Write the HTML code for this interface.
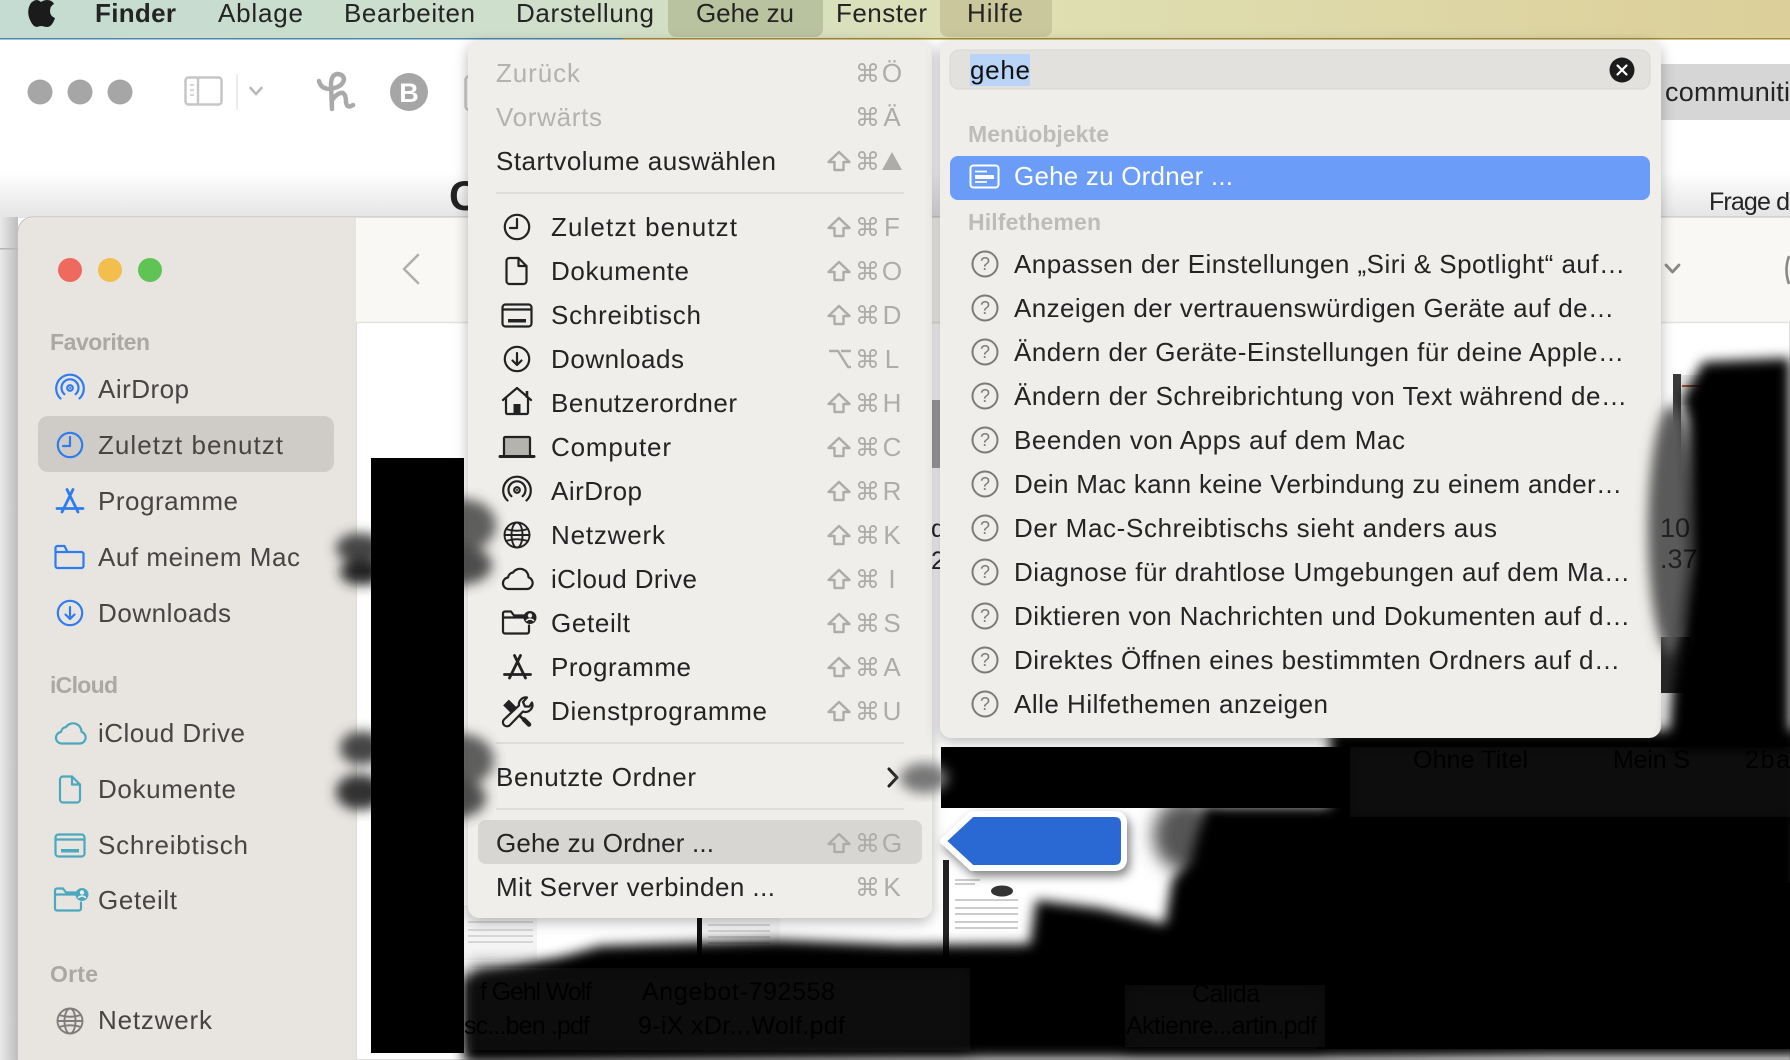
<!DOCTYPE html>
<html lang="de"><head><meta charset="utf-8"><title>Finder Gehe zu</title>
<style>
html,body{margin:0;padding:0;width:1790px;height:1060px;overflow:hidden;background:#fff}
svg{display:block}
text{font-family:"Liberation Sans",Arial,sans-serif;font-size:26px;fill:#242424}
.b{font-weight:700}
.g{fill:#b3b2ae}
.s{fill:#adaca8}
.c{font-family:"DejaVu Sans",sans-serif;font-size:25px;fill:#adaca8}
.l{font-weight:700;font-size:23px;fill:#bebcb8}
.f{fill:#464544}
.sl{font-weight:700;font-size:23px;fill:#aaa8a4}
.q{font-size:18px;fill:#7c7b78;text-anchor:middle}
.m{text-anchor:middle}
.ic{fill:none;stroke:currentColor;stroke-width:2.2;stroke-linecap:round;stroke-linejoin:round}
.d{font-size:25px;fill:#000}
</style></head><body>
<svg width="1790" height="1060" viewBox="0 0 1790 1060" xmlns="http://www.w3.org/2000/svg">
<defs>
<linearGradient id="mb" x1="0" x2="1" y1="0" y2="0"><stop offset="0" stop-color="#c4dcd2"/><stop offset=".3" stop-color="#cfdfcb"/><stop offset=".56" stop-color="#dfe0b4"/><stop offset="1" stop-color="#dccf99"/></linearGradient>
<linearGradient id="fade" x1="0" x2="0" y1="0" y2="1"><stop offset="0" stop-color="#fff"/><stop offset="1" stop-color="#e4e4e4"/></linearGradient>
<linearGradient id="lf" x1="0" x2="1" y1="0" y2="0"><stop offset="0" stop-color="#e9e9e9"/><stop offset="1" stop-color="#bdbdbd"/></linearGradient>
<filter id="b3" x="-30%" y="-30%" width="160%" height="160%"><feGaussianBlur stdDeviation="3"/></filter>
<filter id="b6" x="-30%" y="-30%" width="160%" height="160%"><feGaussianBlur stdDeviation="6"/></filter>
<filter id="b9" x="-50%" y="-50%" width="200%" height="200%"><feGaussianBlur stdDeviation="9"/></filter>
<filter id="ds" x="-10%" y="-10%" width="120%" height="120%"><feDropShadow dx="0" dy="4" stdDeviation="7" flood-color="#000" flood-opacity=".28"/></filter>
<filter id="as" x="-20%" y="-30%" width="140%" height="170%"><feDropShadow dx="3" dy="5" stdDeviation="5" flood-color="#000" flood-opacity=".5"/></filter>
<clipPath id="cm"><rect x="464" y="40" width="60" height="900"/></clipPath>
<path id="sh" fill="none" stroke="#adaca8" stroke-width="2.4" stroke-linejoin="round" d="M11 0L21.500 10H15.500V18H6.500V10H.5Z"/>
<g id="clock" class="ic"><circle r="12.200"/><path d="M0-8V1H-7"/></g>
<g id="doc" class="ic"><path d="M-7-13H2L10-5V10A3 3 0 0 1 7 13H-7A3 3 0 0 1-10 10V-10A3 3 0 0 1-7-13Z"/><path d="M2-13V-5H10"/></g>
<g id="desk" class="ic"><rect x="-14.500" y="-11" width="29" height="22" rx="3"/><path d="M-14-6H14"/><rect x="-9" y="3.500" width="18" height="3.500" fill="currentColor" stroke="none"/></g>
<g id="dl" class="ic"><circle r="12.200"/><path d="M0-6V6M-4.500 1.500L0 6L4.500 1.500"/></g>
<g id="home" class="ic"><path d="M-14-1L0-13L14-1"/><path d="M10-10V-3" stroke-width="2.600" stroke-linecap="butt"/><path d="M-11-3V11.500A1.500 1.500 0 0 0-9.500 13H9.500A1.500 1.500 0 0 0 11 11.500V-3"/><rect x="-3.500" y="3" width="7" height="10" fill="currentColor" stroke="none"/></g>
<g id="lap" class="ic"><path d="M-13 9V-9A1.500 1.500 0 0 1-11.500-10H11.500A1.500 1.500 0 0 1 13-9V9" fill="#b5b3ae"/><path d="M-17 9.500H17" stroke-width="3"/></g>
<g id="air" class="ic"><path d="M-9.500 10.500A13.800 13.800 0 1 1 9.500 10.500"/><path d="M-5.600 6.200A8.500 8.500 0 1 1 5.600 6.200"/><circle r="2.800" fill="none"/><circle r="1" fill="currentColor" stroke="none"/></g>
<g id="globe" class="ic" style="stroke-width:1.900"><circle r="12.500"/><ellipse rx="5.500" ry="12.500"/><path d="M-11-6Q0-2.500 11-6M-11 6Q0 2.500 11 6M-12.500 0H12.500"/></g>
<g id="cloud" class="ic"><path d="M-9 10.500H10A6 6 0 0 0 11.500-1.200A8.500 8.500 0 0 0-4-6A6 6 0 0 0-9-1A5.800 5.800 0 0 0-9 10.500Z"/></g>
<g id="shr" class="ic"><path d="M-16-6V9A2 2 0 0 0-14 11H8A2 2 0 0 0 10 9V3M-16-6V-9A2 2 0 0 1-14-11H-8L-5-7H5M-16-5H5"/><circle cx="11" cy="-5" r="6.500" fill="currentColor" stroke="none"/><circle cx="11" cy="-7" r="2.200" fill="#efeeea" stroke="none"/><path d="M7.500-2Q11-5 14.500-2" fill="none" stroke="#efeeea" stroke-width="1.500"/></g>
<g id="app" class="ic" style="stroke-width:2.800"><path d="M3-11.500L-8 11M-3-11.500L8 11M-13 7.500H13"/></g>
<g id="tool" class="ic"><path d="M-10-9L-2-1" stroke-width="8" stroke-linecap="butt"/><path d="M-2-1L12 12" stroke-width="2.800"/><path d="M8 8L13 13" stroke-width="4.500"/><path d="M-12 8L3-6A7 7 0 0 1 11-14L7-9.500L9-5L13.500-5L16-9A7 7 0 0 1 7 0L-6 13.500A4 4 0 0 1-12 8Z" fill="#efeeea"/></g>
<g id="fold" class="ic"><path d="M-14-5V9A2 2 0 0 0-12 11H12A2 2 0 0 0 14 9V-3A2 2 0 0 0 12-5ZM-14-5V-9A2 2 0 0 1-12-11H-5L-2-5"/></g>
</defs>

<!-- back window -->
<rect width="1790" height="1060" fill="#fff"/>
<rect x="0" y="172" width="1790" height="46" fill="url(#fade)"/>
<rect x="0" y="217" width="18" height="843" fill="url(#lf)"/>
<rect x="0" y="248" width="18" height="1.500" fill="#b5b5b5"/>
<circle cx="40" cy="92" r="12.500" fill="#a6a6a6"/><circle cx="80" cy="92" r="12.500" fill="#a6a6a6"/><circle cx="120" cy="92" r="12.500" fill="#a6a6a6"/>
<rect x="185.500" y="77.500" width="36" height="27" rx="3" fill="none" stroke="#c6c6c6" stroke-width="2.500"/>
<path d="M198 77V105" stroke="#c6c6c6" stroke-width="2.500"/><path d="M190 85h4M190 90h4M190 95h4" stroke="#c6c6c6" stroke-width="1.500"/>
<path d="M237 74V110" stroke="#e6e6e6" stroke-width="1.500"/>
<path d="M250.500 88L256 94L261.500 88" fill="none" stroke="#b8b8b8" stroke-width="2.500" stroke-linecap="round"/>
<path d="M319 81Q321 89 330 89Q343 87 344 79Q343 74 337 74Q331 75 331 85L332 109M332 100Q338 92 343 93Q346 95 346 102Q347 109 353 105" fill="none" stroke="#a9a9a9" stroke-width="4.500" stroke-linecap="round" stroke-linejoin="round"/>
<circle cx="409" cy="92" r="19" fill="#a6a6a6"/><text x="409" y="102" class="b m" style="font-size:27px;fill:#fff">B</text>
<rect x="465.500" y="76" width="20" height="34" rx="4" fill="none" stroke="#c8c8c8" stroke-width="2.500"/>
<text x="449" y="210" class="b" style="font-size:42px;fill:#222">C</text>
<rect x="1655" y="64" width="135" height="56" fill="#d6d6d6"/>
<text x="1665" y="101" textLength="125" lengthAdjust="spacing" style="font-size:27px">communiti</text>
<text x="1709" y="210" textLength="81" lengthAdjust="spacing" style="font-size:25px">Frage d</text>

<!-- finder window -->
<path d="M18 1060V232A15 15 0 0 1 33 217H1790V1060Z" fill="#fff" stroke="#bdbdbd" stroke-width="1"/>
<rect x="356" y="218" width="1434" height="104" fill="#faf8f4"/>
<path d="M356 322.500H1790" stroke="#e4e2de" stroke-width="1.500"/>
<path d="M18 1060V232A15 15 0 0 1 33 218H356V1060Z" fill="#e8e5e1"/>
<path d="M356.500 322V1060" stroke="#dedcd8"/>
<ellipse cx="70" cy="270" rx="12" ry="12" fill="#ee6a5e"/><ellipse cx="110" cy="270" rx="12" ry="12" fill="#f4be4f"/><ellipse cx="150" cy="270" rx="12" ry="12" fill="#5fc454"/>
<path d="M418 255L404 269L418 283" fill="none" stroke="#b2b0ac" stroke-width="2.600" stroke-linecap="round" stroke-linejoin="round"/>
<path d="M1666 265L1672.500 272L1679 265" fill="none" stroke="#8b8a86" stroke-width="2.800" stroke-linecap="round" stroke-linejoin="round"/>
<path d="M1789 256Q1784 270 1789 284" fill="none" stroke="#888" stroke-width="2.600"/>

<text x="50" y="350" textLength="100" lengthAdjust="spacing" class="sl">Favoriten</text>
<use href="#air" transform="translate(70 388)" color="#2f7bf0"/>
<text x="98" y="398" textLength="91" lengthAdjust="spacing" class="f">AirDrop</text>
<rect x="38" y="416" width="296" height="56" rx="10" fill="#cfccc7"/>
<use href="#clock" transform="translate(70 445)" color="#2f7bf0"/>
<text x="98" y="454" textLength="185" lengthAdjust="spacing" class="f">Zuletzt benutzt</text>
<use href="#app" transform="translate(70 501)" color="#2f7bf0"/>
<text x="98" y="510" textLength="140" lengthAdjust="spacing" class="f">Programme</text>
<use href="#fold" transform="translate(69.500 557)" color="#2f7bf0"/>
<text x="98" y="566" textLength="202" lengthAdjust="spacing" class="f">Auf meinem Mac</text>
<use href="#dl" transform="translate(70 613)" color="#2f7bf0"/>
<text x="98" y="622" textLength="133" lengthAdjust="spacing" class="f">Downloads</text>
<text x="50" y="693" textLength="68" lengthAdjust="spacing" class="sl">iCloud</text>
<use href="#cloud" transform="translate(70 733)" color="#4ba8be"/>
<text x="98" y="742" textLength="147" lengthAdjust="spacing" class="f">iCloud Drive</text>
<use href="#doc" transform="translate(70 789.500)" color="#4ba8be"/>
<text x="98" y="798" textLength="138" lengthAdjust="spacing" class="f">Dokumente</text>
<use href="#desk" transform="translate(70 845.500)" color="#4ba8be"/>
<text x="98" y="854" textLength="150" lengthAdjust="spacing" class="f">Schreibtisch</text>
<g transform="translate(71 899.500)" color="#4ba8be"><use href="#shr"/></g>
<text x="98" y="909" textLength="79" lengthAdjust="spacing" class="f">Geteilt</text>
<text x="50" y="982" textLength="48" lengthAdjust="spacing" class="sl">Orte</text>
<use href="#globe" transform="translate(70 1021)" color="#7f7d7b"/>
<text x="98" y="1029" textLength="114" lengthAdjust="spacing" class="f">Netzwerk</text>

<!-- content -->
<rect x="932" y="400" width="8" height="68" fill="#a2a2a2"/>
<text x="931" y="537" style="font-size:25px">d</text><text x="931" y="569" style="font-size:25px">2</text>
<g filter="url(#b6)"><ellipse cx="360" cy="548" rx="24" ry="15" fill="#444"/><ellipse cx="362" cy="572" rx="22" ry="13" fill="#222"/><ellipse cx="362" cy="748" rx="22" ry="17" fill="#444"/><ellipse cx="360" cy="792" rx="24" ry="18" fill="#333"/></g>
<rect x="371" y="458" width="93" height="595" fill="#000"/>

<!-- document thumbs -->
<rect x="464" y="905" width="73" height="55" fill="#f4f4f4"/>
<path d="M468 922H533M468 930H533M468 936H533M468 942H533" stroke="#ccc" stroke-width="1.500"/>
<rect x="697" y="915" width="5" height="42" fill="#111"/><rect x="702" y="915" width="78" height="42" fill="#f6f6f6"/>
<path d="M708 925H770M708 931H770M708 937H770M708 943H770" stroke="#ccc" stroke-width="1.500"/>
<rect x="943" y="860" width="6" height="97" fill="#222"/><rect x="949" y="860" width="78" height="80" fill="#fff"/>
<path d="M955 880H980M955 884H975M955 900H1018M955 908H1018M955 914H1018M955 922H1018M955 928H1018" stroke="#bbb" stroke-width="1.500"/>
<ellipse cx="1002" cy="891" rx="11" ry="5.500" fill="#333"/>

<!-- black redactions -->
<ellipse cx="1185" cy="835" rx="32" ry="36" fill="#555" filter="url(#b9)"/>
<rect x="1661" y="637" width="30" height="56" fill="#2c2c2c"/>
<path filter="url(#b6)" fill="#000" d="M464 978L560 958L600 946L780 940L900 945L1030 944L1036 900L1100 908L1165 924L1172 880L1190 860L1205 806L1330 806V730H1800V1056H1550L1350 1058L1100 1058L900 1058L464 1062Z"/>
<rect x="941" y="747" width="424" height="61" fill="#000"/>
<rect x="1317" y="883" width="473" height="166" fill="#000"/>
<rect x="1350" y="747" width="440" height="70" fill="#111" filter="url(#b6)"/>
<text x="1413" y="768" textLength="115" lengthAdjust="spacing" class="d">Ohne Titel</text>
<text x="1613" y="768" textLength="77" lengthAdjust="spacing" class="d">Mein S</text>
<text x="1745" y="768" textLength="45" lengthAdjust="spacing" class="d">2ba</text>
<rect x="470" y="968" width="500" height="82" fill="#101010" filter="url(#b9)"/>
<text x="480" y="1000" textLength="112" lengthAdjust="spacing" class="d">f Gehl Wolf</text>
<text x="642" y="1000" textLength="193" lengthAdjust="spacing" class="d">Angebot-792558</text>
<text x="464" y="1034" textLength="126" lengthAdjust="spacing" class="d">sc...ben .pdf</text>
<text x="638" y="1034" textLength="207" lengthAdjust="spacing" class="d">9-iX xDr...Wolf.pdf</text>
<rect x="1125" y="985" width="200" height="62" fill="#0e0e0e" filter="url(#b9)"/>
<text x="1192" y="1002" textLength="68" lengthAdjust="spacing" class="d">Calida</text>
<text x="1126" y="1034" textLength="191" lengthAdjust="spacing" class="d">Aktienre...artin.pdf</text>

<!-- top right thumb behind blob -->
<rect x="1673" y="374" width="8" height="115" fill="#3a3a3a"/>
<rect x="1681" y="375" width="70" height="30" fill="#e8e8e8"/>
<path d="M1682 386H1725M1738 386H1750" stroke="#b05a2a" stroke-width="2"/>

<!-- menu bar -->
<rect width="1790" height="38" fill="url(#mb)"/>
<rect y="38" width="623" height="1.500" fill="#4d86ae"/>
<rect x="623" y="38" width="1167" height="1.500" fill="#a58a2b"/>
<path d="M668 0H823V29A8 8 0 0 1 815 37H676A8 8 0 0 1 668 29Z" fill="#bac39f"/>
<path d="M940 0H1052V29A8 8 0 0 1 1044 37H948A8 8 0 0 1 940 29Z" fill="#cac79c"/>
<path d="M42-2Q43-6 46-7Q46-2 42-1ZM41 2Q44 0 47 0Q52 0 54 4Q50 6 50 11Q50 16 55 18Q52 27 47 27Q45 27 42 26Q39 26 37 27Q33 27 30 20Q27 13 29 7Q31 1 36 0Q39 0 41 2Z" fill="#1b1b1b"/>
<text x="95" y="22" textLength="81" lengthAdjust="spacing" class="b">Finder</text>
<text x="218" y="22" textLength="85" lengthAdjust="spacing">Ablage</text>
<text x="344" y="22" textLength="131" lengthAdjust="spacing">Bearbeiten</text>
<text x="516" y="22" textLength="138" lengthAdjust="spacing">Darstellung</text>
<text x="696" y="22" textLength="98" lengthAdjust="spacing">Gehe zu</text>
<text x="836" y="22" textLength="91" lengthAdjust="spacing">Fenster</text>
<text x="967" y="22" textLength="56" lengthAdjust="spacing">Hilfe</text>

<!-- Go menu -->
<rect x="468" y="40" width="464" height="878" rx="12" fill="#efeeea" filter="url(#ds)"/>
<text x="496" y="82" textLength="84" lengthAdjust="spacing" class="g">Zurück</text>
<text x="496" y="126" textLength="106" lengthAdjust="spacing" class="g">Vorwärts</text>
<text x="496" y="170" textLength="280" lengthAdjust="spacing">Startvolume auswählen</text>
<path d="M496 193H904M496 743H904M496 809H904" stroke="#d9d7d3" stroke-width="1.500"/>
<rect x="478" y="820" width="444" height="44" rx="8" fill="#d8d6d2"/>
<g color="#222">
<use href="#clock" transform="translate(517 227)"/>
<use href="#doc" transform="translate(516.500 271)"/>
<use href="#desk" transform="translate(517 315.500)"/>
<use href="#dl" transform="translate(517 359)"/>
<use href="#home" transform="translate(517 401)"/>
<use href="#lap" transform="translate(517 447)"/>
<use href="#air" transform="translate(517 490)"/>
<use href="#globe" transform="translate(517 535)"/>
<use href="#cloud" transform="translate(517 578.500)"/>
<use href="#shr" transform="translate(519 622.500)"/>
<use href="#app" transform="translate(517.500 667)"/>
<use href="#tool" transform="translate(516 711.500)"/>
</g>
<text x="551" y="236" textLength="186" lengthAdjust="spacing">Zuletzt benutzt</text>
<text x="551" y="280" textLength="138" lengthAdjust="spacing">Dokumente</text>
<text x="551" y="324" textLength="150" lengthAdjust="spacing">Schreibtisch</text>
<text x="551" y="368" textLength="133" lengthAdjust="spacing">Downloads</text>
<text x="551" y="412" textLength="186" lengthAdjust="spacing">Benutzerordner</text>
<text x="551" y="456" textLength="120" lengthAdjust="spacing">Computer</text>
<text x="551" y="500" textLength="91" lengthAdjust="spacing">AirDrop</text>
<text x="551" y="544" textLength="114" lengthAdjust="spacing">Netzwerk</text>
<text x="551" y="588" textLength="146" lengthAdjust="spacing">iCloud Drive</text>
<text x="551" y="632" textLength="79" lengthAdjust="spacing">Geteilt</text>
<text x="551" y="676" textLength="140" lengthAdjust="spacing">Programme</text>
<text x="551" y="720" textLength="216" lengthAdjust="spacing">Dienstprogramme</text>
<text x="496" y="786" textLength="200" lengthAdjust="spacing">Benutzte Ordner</text>
<text x="496" y="852" textLength="218" lengthAdjust="spacing">Gehe zu Ordner ...</text>
<text x="496" y="896" textLength="279" lengthAdjust="spacing">Mit Server verbinden ...</text>
<path d="M889 769L897 777.500L889 786" fill="none" stroke="#222" stroke-width="3" stroke-linecap="round" stroke-linejoin="round"/>

<!-- shortcuts -->
<text x="855" y="82" class="c">⌘</text><text x="892" y="82" class="s m">Ö</text>
<text x="855" y="126" class="c">⌘</text><text x="892" y="126" class="s m">Ä</text>
<use href="#sh" x="828" y="152"/><text x="855" y="170" class="c">⌘</text><path d="M892 152L902 170H882Z" fill="#adaca8"/>
<use href="#sh" x="828" y="218"/><text x="855" y="236" class="c">⌘</text><text x="892" y="236" class="s m">F</text>
<use href="#sh" x="828" y="262"/><text x="855" y="280" class="c">⌘</text><text x="892" y="280" class="s m">O</text>
<use href="#sh" x="828" y="306"/><text x="855" y="324" class="c">⌘</text><text x="892" y="324" class="s m">D</text>
<path d="M829 351H838L848 367H851M841 351H851" fill="none" stroke="#adaca8" stroke-width="2.400"/><text x="855" y="368" class="c">⌘</text><text x="892" y="368" class="s m">L</text>
<use href="#sh" x="828" y="394"/><text x="855" y="412" class="c">⌘</text><text x="892" y="412" class="s m">H</text>
<use href="#sh" x="828" y="438"/><text x="855" y="456" class="c">⌘</text><text x="892" y="456" class="s m">C</text>
<use href="#sh" x="828" y="482"/><text x="855" y="500" class="c">⌘</text><text x="892" y="500" class="s m">R</text>
<use href="#sh" x="828" y="526"/><text x="855" y="544" class="c">⌘</text><text x="892" y="544" class="s m">K</text>
<use href="#sh" x="828" y="570"/><text x="855" y="588" class="c">⌘</text><text x="892" y="588" class="s m">I</text>
<use href="#sh" x="828" y="614"/><text x="855" y="632" class="c">⌘</text><text x="892" y="632" class="s m">S</text>
<use href="#sh" x="828" y="658"/><text x="855" y="676" class="c">⌘</text><text x="892" y="676" class="s m">A</text>
<use href="#sh" x="828" y="702"/><text x="855" y="720" class="c">⌘</text><text x="892" y="720" class="s m">U</text>
<use href="#sh" x="828" y="834"/><text x="855" y="852" class="c">⌘</text><text x="892" y="852" class="s m">G</text>
<text x="855" y="896" class="c">⌘</text><text x="892" y="896" class="s m">K</text>

<!-- scribbles over menu -->
<g clip-path="url(#cm)"><g filter="url(#b6)" opacity=".85"><ellipse cx="464" cy="525" rx="32" ry="26" fill="#444"/><ellipse cx="460" cy="565" rx="32" ry="20" fill="#333"/><ellipse cx="462" cy="760" rx="32" ry="26" fill="#444"/><ellipse cx="456" cy="798" rx="30" ry="20" fill="#333"/></g></g>
<ellipse cx="924" cy="778" rx="24" ry="15" fill="#777" filter="url(#b6)"/>

<!-- Help panel -->
<rect x="940" y="40" width="721" height="698" rx="12" fill="#f0eeea" filter="url(#ds)"/>
<rect x="950" y="50" width="700" height="39" rx="9" fill="#e3e1dd" stroke="#dad8d4"/>
<rect x="970" y="54" width="60" height="32" fill="#b9d4f7"/>
<text x="970" y="79" textLength="60" lengthAdjust="spacing" style="fill:#111">gehe</text>
<circle cx="1622" cy="70" r="12.500" fill="#1c1c1c"/>
<path d="M1617.500 65.500L1626.500 74.500M1626.500 65.500L1617.500 74.500" stroke="#fff" stroke-width="2.200" stroke-linecap="round"/>
<text x="968" y="142" textLength="141" lengthAdjust="spacing" class="l">Menüobjekte</text>
<rect x="950" y="156" width="700" height="44" rx="8" fill="#6a9cf8"/>
<rect x="970.500" y="165.500" width="28" height="22" rx="3" fill="none" stroke="#fff" stroke-width="2"/>
<path d="M975 171.500H987M975 182H987" stroke="#fff" stroke-width="1.800"/><rect x="975" y="175" width="19" height="4" fill="#fff"/>
<text x="1014" y="185" textLength="219" lengthAdjust="spacing" style="fill:#fff">Gehe zu Ordner ...</text>
<text x="968" y="230" textLength="133" lengthAdjust="spacing" class="l">Hilfethemen</text>
<g fill="none" stroke="#7c7b78" stroke-width="2"><circle cx="985" cy="264" r="12.500"/><circle cx="985" cy="308" r="12.500"/><circle cx="985" cy="352" r="12.500"/><circle cx="985" cy="396" r="12.500"/><circle cx="985" cy="440" r="12.500"/><circle cx="985" cy="484" r="12.500"/><circle cx="985" cy="528" r="12.500"/><circle cx="985" cy="572" r="12.500"/><circle cx="985" cy="616" r="12.500"/><circle cx="985" cy="660" r="12.500"/><circle cx="985" cy="704" r="12.500"/></g>
<text x="985" y="270" class="q">?</text><text x="985" y="314" class="q">?</text><text x="985" y="358" class="q">?</text><text x="985" y="402" class="q">?</text><text x="985" y="446" class="q">?</text><text x="985" y="490" class="q">?</text><text x="985" y="534" class="q">?</text><text x="985" y="578" class="q">?</text><text x="985" y="622" class="q">?</text><text x="985" y="666" class="q">?</text><text x="985" y="710" class="q">?</text>
<text x="1014" y="273" textLength="611" lengthAdjust="spacing">Anpassen der Einstellungen „Siri &amp; Spotlight“ auf…</text>
<text x="1014" y="317" textLength="600" lengthAdjust="spacing">Anzeigen der vertrauenswürdigen Geräte auf de…</text>
<text x="1014" y="361" textLength="610" lengthAdjust="spacing">Ändern der Geräte-Einstellungen für deine Apple…</text>
<text x="1014" y="405" textLength="613" lengthAdjust="spacing">Ändern der Schreibrichtung von Text während de…</text>
<text x="1014" y="449" textLength="391" lengthAdjust="spacing">Beenden von Apps auf dem Mac</text>
<text x="1014" y="493" textLength="608" lengthAdjust="spacing">Dein Mac kann keine Verbindung zu einem ander…</text>
<text x="1014" y="537" textLength="483" lengthAdjust="spacing">Der Mac-Schreibtischs sieht anders aus</text>
<text x="1014" y="581" textLength="616" lengthAdjust="spacing">Diagnose für drahtlose Umgebungen auf dem Ma…</text>
<text x="1014" y="625" textLength="616" lengthAdjust="spacing">Diktieren von Nachrichten und Dokumenten auf d…</text>
<text x="1014" y="669" textLength="606" lengthAdjust="spacing">Direktes Öffnen eines bestimmten Ordners auf d…</text>
<text x="1014" y="713" textLength="314" lengthAdjust="spacing">Alle Hilfethemen anzeigen</text>

<!-- right blob -->
<ellipse cx="1672" cy="530" rx="24" ry="125" fill="#5a5a5a" filter="url(#b6)"/>
<text x="1660" y="537" style="font-size:27px;fill:#222">10</text>
<text x="1660" y="568" style="font-size:27px;fill:#222">.37</text>
<path filter="url(#b6)" fill="#000" d="M1688 420L1682 400L1703 362L1790 358V750H1668L1672 690L1680 640L1690 560Z"/>

<!-- arrow -->
<path filter="url(#as)" fill="#2c67d3" stroke="#fff" stroke-width="6" stroke-linejoin="round" d="M943 841L972 814H1114Q1124 814 1124 824V858Q1124 868 1114 868H972Z"/>
</svg>
</body></html>
